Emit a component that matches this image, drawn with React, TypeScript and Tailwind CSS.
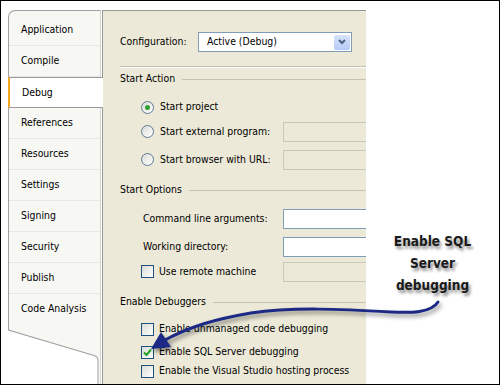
import React from 'react';

const tabs = ['Application', 'Compile', 'Debug', 'References', 'Resources', 'Settings', 'Signing', 'Security', 'Publish', 'Code Analysis'];

const Radio = ({ checked }: { checked?: boolean }) => (
  <span className="w-[13px] h-[13px] rounded-full border border-[#5f7a96] bg-gradient-to-br from-[#dcdcd5] to-white flex items-center justify-center shrink-0">
    {checked && <span className="w-[5px] h-[5px] rounded-full bg-[#31a131]" />}
  </span>
);

const Check = ({ checked }: { checked?: boolean }) => (
  <span className="w-[13px] h-[13px] border border-[#1c5180] bg-gradient-to-br from-[#dcdcd5] to-white flex items-center justify-center shrink-0">
    {checked && (
      <svg width="9" height="9" viewBox="0 0 9 9">
        <path d="M1 4.5 L3.5 7 L8 1.5" fill="none" stroke="#21a121" strokeWidth="2" />
      </svg>
    )}
  </span>
);

const Box = ({ disabled }: { disabled?: boolean }) => (
  <div className={disabled ? 'w-[100px] h-[20px] border border-[#c9c7ba] bg-[#ece9d8] shrink-0' : 'w-[100px] h-[20px] border border-[#7f9db9] bg-white shrink-0'} />
);

const Section = ({ title }: { title: string }) => (
  <div className="h-[14px] flex items-center">
    <span>{title}</span>
    <div className="flex-1 ml-[7px] border-t border-[#c5c2b2]" />
  </div>
);

export default function App() {
  return (
    <div className="w-[500px] h-[385px] border border-black bg-white flex relative overflow-hidden text-[10.4px] text-black font-['DejaVu_Sans_Condensed','DejaVu_Sans',sans-serif]">
      {/* tab strip */}
      <div className="ml-[7px] mt-[9px] w-[93px] flex flex-col">
        <div className="border-t border-l border-r border-t-[#a0a0a0] border-l-[#a0a0a0] border-r-[#d6d6d0] rounded-tl-[7px] bg-[#f7f7f4] pt-[4px]">
          {tabs.map((t) =>
            t === 'Debug' ? (
              <div key={t} className="relative z-10 h-[31px] -ml-[1px] -mr-[3px] bg-white border-y border-[#9a9a9a] border-l-2 border-l-[#f5a623] pl-[12px] flex items-center">
                {t}
              </div>
            ) : (
              <div key={t} className="h-[31px] border-b border-[#e8e8e3] pl-[12px] flex items-center">
                {t}
              </div>
            )
          )}
        </div>
        <svg className="flex-1 -mt-[1px]" width="93" viewBox="0 0 93 59" preserveAspectRatio="none">
          <path d="M0 0 L93 0 L93 59 L90 59 L90 36 Q90 32 86 31 L0.5 6 Z" fill="#f7f7f4" />
          <path d="M0.5 0 L0.5 6 L86 31 Q90 32 90 36 L90 59" fill="none" stroke="#a0a0a0" />
          <path d="M92.5 0 L92.5 59" stroke="#d6d6d0" />
        </svg>
      </div>

      {/* property panel */}
      <div className="ml-[1px] mt-[9px] w-[264px] shrink-0 bg-[#ece9d8] border-t border-l border-[#919b9c] overflow-hidden pl-[17px] pt-[21px]">
        <div className="h-[20px] flex items-center">
          <span className="w-[78px] shrink-0">Configuration:</span>
          <div className="w-[154px] h-[20px] border border-[#7f9db9] bg-white flex items-center shrink-0">
            <span className="pl-[8px] flex-1">Active (Debug)</span>
            <span className="w-[16px] h-[15px] mr-[1px] bg-gradient-to-b from-[#d7e3fc] to-[#b6cbf7] rounded-[2px] flex items-center justify-center">
              <svg width="8" height="6" viewBox="0 0 8 6">
                <path d="M1 1 L4 4 L7 1" fill="none" stroke="#4d6185" strokeWidth="2" />
              </svg>
            </span>
          </div>
        </div>

        <div className="mt-[14px] border-t border-[#c5c2b2] border-b border-b-white" />

        <div className="mt-[4px]">
          <Section title="Start Action" />
        </div>
        <div className="ml-[21px]">
          <div className="mt-[11px] h-[20px] flex items-center gap-[6px]">
            <Radio checked />
            <span>Start project</span>
          </div>
          <div className="mt-[5px] h-[20px] flex items-center">
            <div className="w-[142px] flex items-center gap-[6px] shrink-0">
              <Radio />
              <span>Start external program:</span>
            </div>
            <Box disabled />
          </div>
          <div className="mt-[8px] h-[20px] flex items-center">
            <div className="w-[142px] flex items-center gap-[6px] shrink-0">
              <Radio />
              <span>Start browser with URL:</span>
            </div>
            <Box disabled />
          </div>
        </div>

        <div className="mt-[13px]">
          <Section title="Start Options" />
        </div>
        <div className="ml-[21px]">
          <div className="mt-[12px] h-[20px] flex items-center">
            <span className="w-[142px] pl-[2px] shrink-0">Command line arguments:</span>
            <Box />
          </div>
          <div className="mt-[8px] h-[20px] flex items-center">
            <span className="w-[142px] pl-[2px] shrink-0">Working directory:</span>
            <Box />
          </div>
          <div className="mt-[5px] h-[20px] flex items-center">
            <div className="w-[142px] flex items-center gap-[5px] shrink-0">
              <Check />
              <span>Use remote machine</span>
            </div>
            <Box disabled />
          </div>
        </div>

        <div className="mt-[13px]">
          <Section title="Enable Debuggers" />
        </div>
        <div className="ml-[21px]">
          <div className="mt-[11px] h-[18px] flex items-center gap-[5px]">
            <Check />
            <span>Enable unmanaged code debugging</span>
          </div>
          <div className="mt-[5px] h-[18px] flex items-center gap-[5px]">
            <Check checked />
            <span>Enable SQL Server debugging</span>
          </div>
          <div className="mt-[1px] h-[18px] flex items-center gap-[5px]">
            <Check />
            <span className="whitespace-nowrap">Enable the Visual Studio hosting process</span>
          </div>
        </div>
      </div>

      {/* annotation */}
      <div className="flex-1 pt-[229px] text-center font-bold text-[13.5px] leading-[22px] text-[#1a1a1a] [text-shadow:2px_3px_3px_rgba(0,0,0,0.45)]">
        <div>Enable SQL</div>
        <div>Server</div>
        <div>debugging</div>
      </div>

      <svg className="absolute left-0 top-0 pointer-events-none drop-shadow-[2px_3px_2px_rgba(0,0,0,0.45)]" width="500" height="385" viewBox="0 0 500 385">
        <path d="M437 301 C430 312 410 312 390 311 C340 308 290 306 250 312 C215 318 190 325 164 339" fill="none" stroke="#1c2a86" strokeWidth="3" strokeLinecap="round" />
        <polygon points="150,348 160,331 170,346" fill="#1c2a86" />
      </svg>
    </div>
  );
}
